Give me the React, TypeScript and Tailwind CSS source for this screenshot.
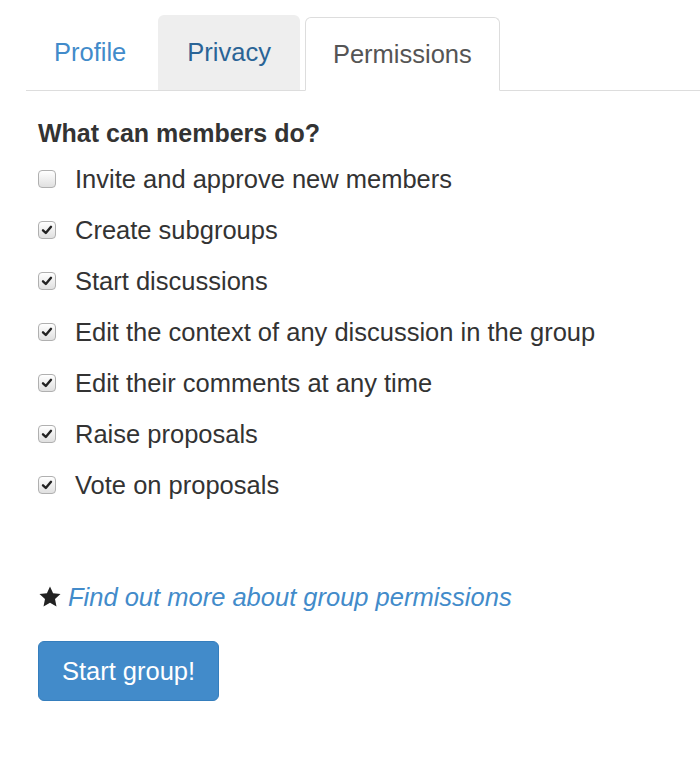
import { useState } from "react";

const permissions = [
  { label: "Invite and approve new members", checked: false },
  { label: "Create subgroups", checked: true },
  { label: "Start discussions", checked: true },
  { label: "Edit the context of any discussion in the group", checked: true },
  { label: "Edit their comments at any time", checked: true },
  { label: "Raise proposals", checked: true },
  { label: "Vote on proposals", checked: true },
];

function Checkbox({ checked, onClick }: { checked: boolean; onClick: () => void }) {
  return (
    <span
      onClick={onClick}
      className="w-[18px] h-[18px] shrink-0 rounded-[4px] border border-[#b0b0b0] bg-gradient-to-b from-white to-[#e0e0e0] flex items-center justify-center cursor-pointer"
    >
      {checked && (
        <svg viewBox="0 0 12 12" className="w-[12px] h-[12px]">
          <path d="M2 6.3 L4.8 9 L10 2.8" fill="none" stroke="#222" strokeWidth="2.4" strokeLinecap="round" strokeLinejoin="round" />
        </svg>
      )}
    </span>
  );
}

export default function App() {
  const [items, setItems] = useState(permissions);

  function toggle(i: number) {
    setItems((prev) => prev.map((p, j) => (j === i ? { ...p, checked: !p.checked } : p)));
  }

  return (
    <div className="w-[700px] h-[766px] bg-white font-['Liberation_Sans',Arial,sans-serif] text-[#333] overflow-hidden">
      {/* Tabs */}
      <div className="ml-[26px] mt-[15px] flex items-end border-b border-[#ddd]">
        <div className="h-[75px] px-[28px] mr-[4px] flex items-center text-[25.5px] text-[#428bca] rounded-t-[6px]">
          Profile
        </div>
        <div className="h-[75px] px-[29px] mr-[5px] flex items-center text-[25.5px] text-[#2a6496] bg-[#eee] rounded-t-[6px]">
          Privacy
        </div>
        <div className="h-[74px] px-[27px] -mb-px flex items-center text-[25.5px] text-[#555] bg-white border border-[#ddd] border-b-white rounded-t-[6px]">
          Permissions
        </div>
      </div>

      {/* Content */}
      <div className="px-[38px]">
        <h3 className="mt-[27px] text-[25px] leading-[30px] font-bold">What can members do?</h3>
        <div className="mt-[16px] flex flex-col gap-[21px]">
          {items.map((p, i) => (
            <label key={p.label} className="flex items-center gap-[19px] text-[25.5px] leading-[30px]">
              <Checkbox checked={p.checked} onClick={() => toggle(i)} />
              <span>{p.label}</span>
            </label>
          ))}
        </div>

        <div className="mt-[82px] flex items-center gap-[6px] text-[25.5px] leading-[30px]">
          <svg viewBox="0 0 24 24" className="w-[24px] h-[24px] shrink-0">
            <path
              d="M12 1.5 L15.1 8.3 L22.5 9.1 L17 14.1 L18.5 21.5 L12 17.8 L5.5 21.5 L7 14.1 L1.5 9.1 L8.9 8.3 Z"
              fill="#222"
            />
          </svg>
          <a href="#" className="italic text-[#428bca]">Find out more about group permissions</a>
        </div>

        <button className="mt-[29px] w-[181px] h-[60px] bg-[#428bca] border border-[#357ebd] rounded-[6px] text-white text-[25.5px] flex items-center justify-center">
          Start group!
        </button>
      </div>
    </div>
  );
}
